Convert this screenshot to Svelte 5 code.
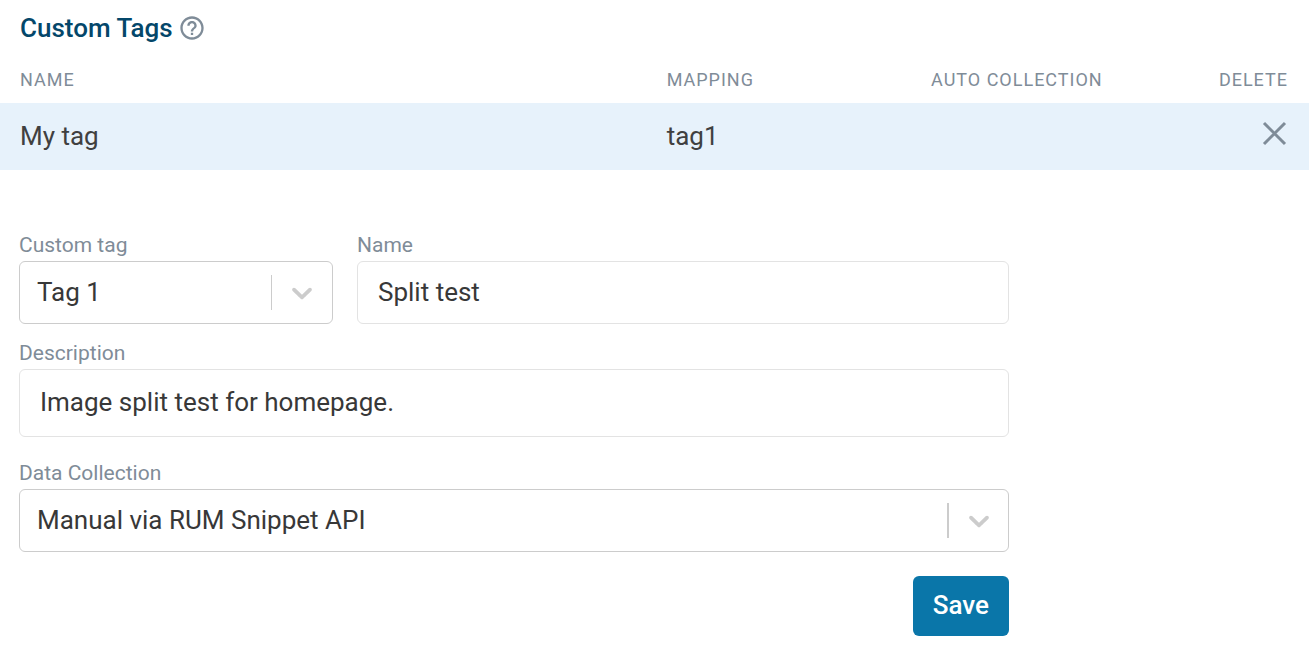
<script>
  let tags = $state([{ name: 'My tag', mapping: 'tag1', auto: '' }]);

  let customTag = $state('Tag 1');
  let name = $state('Split test');
  let description = $state('Image split test for homepage.');
  let collection = $state('Manual via RUM Snippet API');

  const tagOptions = ['Tag 1', 'Tag 2', 'Tag 3'];
  const collectionOptions = ['Manual via RUM Snippet API', 'Automatic'];

  function removeTag(index) {
    tags.splice(index, 1);
  }

  function handleSave(event) {
    event.preventDefault();
    tags.push({ name, mapping: customTag.toLowerCase().replace(' ', ''), auto: '' });
  }
</script>

{#snippet indicator()}
  <span class="indicator">
    <svg viewBox="0 0 20 20" aria-hidden="true">
      <path d="M4.516 7.548c0.436-0.446 1.043-0.481 1.576 0l3.908 3.747 3.908-3.747c0.533-0.481 1.141-0.446 1.574 0 0.436 0.445 0.408 1.197 0 1.615-0.406 0.418-4.695 4.502-4.695 4.502-0.217 0.223-0.502 0.335-0.787 0.335s-0.57-0.112-0.789-0.335c0 0-4.287-4.084-4.695-4.502s-0.436-1.17 0-1.615z" />
    </svg>
  </span>
{/snippet}

<main>
  <header>
    <h1>Custom Tags</h1>
    <button class="icon-btn" type="button" aria-label="Help">
      <svg class="help" viewBox="0 0 24 24" aria-hidden="true">
        <path d="M11 18h2v-2h-2v2zm1-16C6.480 2 2 6.480 2 12s4.480 10 10 10 10-4.480 10-10S17.520 2 12 2zm0 18c-4.410 0-8-3.590-8-8s3.590-8 8-8 8 3.590 8 8-3.590 8-8 8zm0-14c-2.210 0-4 1.790-4 4h2c0-1.100.9-2 2-2s2 .9 2 2c0 2-3 1.750-3 5h2c0-2.250 3-2.500 3-5 0-2.210-1.790-4-4-4z" />
      </svg>
    </button>
  </header>

  <table>
    <thead>
      <tr>
        <th class="col-name">Name</th>
        <th class="col-mid">Mapping</th>
        <th class="col-mid">Auto collection</th>
        <th class="col-delete">Delete</th>
      </tr>
    </thead>
    <tbody>
      {#each tags as tag, i}
        <tr>
          <td>{tag.name}</td>
          <td>{tag.mapping}</td>
          <td>{tag.auto}</td>
          <td class="col-delete">
            <button class="icon-btn" type="button" aria-label="Delete tag" onclick={() => removeTag(i)}>
              <svg class="cross" viewBox="0 0 28 28" aria-hidden="true">
                <path d="M4 3l21 21M25 3L4 24" />
              </svg>
            </button>
          </td>
        </tr>
      {/each}
    </tbody>
  </table>

  <form onsubmit={handleSave}>
    <div class="row">
      <div class="field">
        <label for="custom-tag">Custom tag</label>
        <div class="select">
          <select id="custom-tag" bind:value={customTag}>
            {#each tagOptions as option}
              <option>{option}</option>
            {/each}
          </select>
          {@render indicator()}
        </div>
      </div>
      <div class="field">
        <label for="name">Name</label>
        <input type="text" id="name" bind:value={name} />
      </div>
    </div>
    <div class="field">
      <label for="description">Description</label>
      <input class="tall" type="text" id="description" bind:value={description} />
    </div>
    <div class="field collection">
      <label for="collection">Data Collection</label>
      <div class="select wide">
        <select id="collection" bind:value={collection}>
          {#each collectionOptions as option}
            <option>{option}</option>
          {/each}
        </select>
        {@render indicator()}
      </div>
    </div>
    <button class="save" type="submit">Save</button>
  </form>
</main>

<style>
  :global(body) {
    margin: 0;
    background: #fff;
  }
  main {
    font-family: Roboto, sans-serif;
    font-size: 26px;
    color: #404040;
  }
  header {
    display: flex;
    align-items: center;
    gap: 5px;
    padding: 12px 20px 0;
  }
  h1 {
    margin: 0;
    font-size: 26px;
    line-height: 32px;
    font-weight: 500;
    color: #04476a;
  }
  svg { display: block; }
  .icon-btn { padding: 0; border: none; background: none; cursor: pointer; }
  .help { width: 28px; height: 28px; fill: #7f8c98; }
  .cross {
    width: 28px;
    height: 28px;
    fill: none;
    stroke: #7f8c98;
    stroke-width: 3;
  }

  table {
    width: 100%;
    margin-top: 12px;
    border-collapse: collapse;
    table-layout: fixed;
  }
  th, td { box-sizing: border-box; padding: 0 21px 0 20px; }
  th {
    height: 47px;
    font-size: 18px;
    font-weight: 400;
    letter-spacing: 1px;
    text-align: left;
    text-transform: uppercase;
    white-space: nowrap;
    color: #7f8c98;
  }
  td { height: 67px; padding-bottom: 2px; background: #e7f2fb; }
  .col-name { width: 49.4%; }
  .col-mid { width: 20.2%; }
  .col-delete { text-align: right; }
  td.col-delete { padding-bottom: 8px; }
  td .icon-btn { vertical-align: middle; }

  form {
    display: flex;
    flex-direction: column;
    max-width: 990px;
    margin: 61px 19px 0;
  }
  .row {
    display: grid;
    grid-template-columns: 314px 1fr;
    gap: 24px;
    margin-bottom: 15px;
  }
  .field { display: flex; flex-direction: column; }
  .collection { margin-top: 22px; }
  label {
    margin-bottom: 2px;
    font-size: 21px;
    line-height: 28px;
    color: #7f8c98;
  }
  input, select {
    width: 100%;
    height: 63px;
    box-sizing: border-box;
    border-radius: 6px;
    background: #fff;
    font: inherit;
    color: #383838;
  }
  input { padding: 0 20px 2px; border: 1px solid #e3e3e3; }
  .tall { height: 68px; }
  .select { display: grid; align-items: center; }
  select {
    grid-area: 1 / 1;
    appearance: none;
    padding: 0 64px 2px 17px;
    border: 1px solid #ccc;
  }
  .indicator {
    grid-area: 1 / 1;
    justify-self: end;
    padding: 0 13px;
    margin-right: 1px;
    border-left: 1px solid #ccc;
    pointer-events: none;
  }
  .wide .indicator { margin-right: 0; border-left-width: 2px; }
  .indicator svg { width: 34px; height: 35px; fill: #ccc; }
  .save {
    align-self: flex-end;
    height: 60px;
    margin-top: 24px;
    padding: 0 20px 2px;
    border: none;
    border-radius: 6px;
    background: #0a76a9;
    font: inherit;
    font-weight: 500;
    color: #fff;
    cursor: pointer;
  }
</style>
